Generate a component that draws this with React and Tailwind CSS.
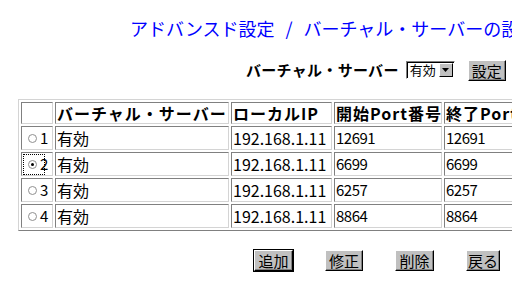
const rows = [
  { no: 1, state: '有効', ip: '192.168.1.11', start: '12691', end: '12691' },
  { no: 2, state: '有効', ip: '192.168.1.11', start: '6699', end: '6699', checked: true },
  { no: 3, state: '有効', ip: '192.168.1.11', start: '6257', end: '6257' },
  { no: 4, state: '有効', ip: '192.168.1.11', start: '8864', end: '8864' },
];

const cell =
  'p-0 pl-[1px] border border-t-[#808080] border-l-[#808080] border-b-[#d4d4d4] border-r-[#d4d4d4] align-middle whitespace-nowrap overflow-hidden';

const head = cell + ' text-left text-[16px] font-bold tracking-[1px] leading-[18px]';

const Radio = ({ checked }) => (
  <span className="relative shrink-0 inline-block w-[9px] h-[9px] rounded-full border border-[#909090] bg-white">
    {checked && (
      <span className="absolute left-[2px] top-[2px] w-[3px] h-[3px] rounded-full bg-black" />
    )}
  </span>
);

// classic raised button, width taken from the screenshot
const WinButton = ({ label, isDefault, className }) => (
  <span className={(isDefault ? 'border border-black ' : '') + 'inline-flex ' + className}>
    <button
      type="button"
      className="w-full h-[21px] p-0 bg-[#c0c0c0] text-[15px] leading-[16px] text-black border border-t-white border-l-white border-b-black border-r-black shadow-[inset_-1px_-1px_#808080]"
    >
      {label}
    </button>
  </span>
);

export default function App() {
  return (
    <div className="w-[512px] h-[286px] overflow-hidden bg-white pt-[16px] font-['Noto_Sans_CJK_JP',sans-serif] text-black">
      <div className="h-[24px] leading-[24px] pl-[130px] text-[18px] text-[#0000ff] whitespace-nowrap">
        アドバンスド設定<span className="inline-block w-[29px] text-center">/</span>バーチャル・サーバーの設定
      </div>

      <div className="mt-[19px] h-[21px] flex items-center pl-[246px] whitespace-nowrap">
        <span className="text-[15px] font-bold tracking-[0.3px] leading-[20px]">バーチャル・サーバー</span>
        <span className="ml-[7px] w-[49px] h-[18px] flex items-center bg-white border border-t-[#808080] border-l-[#808080] border-b-white border-r-white shadow-[inset_1px_1px_#000]">
          <span className="flex-1 pl-[3px] text-[13px] leading-[14px]">有効</span>
          <span className="w-[14px] h-[14px] mr-[1px] bg-[#c0c0c0] border border-t-white border-l-white border-b-black border-r-black flex items-center justify-center">
            <svg width="7" height="4" viewBox="0 0 7 4">
              <path d="M0 0h7L3.5 4z" fill="#000" />
            </svg>
          </span>
        </span>
        <span className="ml-[13px]">
          <button
            type="button"
            className="h-[21px] w-[38px] p-0 bg-[#c0c0c0] text-[15px] leading-[16px] border border-t-white border-l-white border-b-black border-r-black shadow-[inset_-1px_-1px_#808080]"
          >
            設定
          </button>
        </span>
      </div>

      <table className="mt-[19px] ml-[18px] table-fixed border-separate border-spacing-[2px] border border-t-[#d4d4d4] border-l-[#d4d4d4] border-b-[#808080] border-r-[#808080] w-[541px]">
        <colgroup>
          <col className="w-[32px]" />
          <col className="w-[174px]" />
          <col className="w-[101px]" />
          <col className="w-[108px]" />
          <col className="w-[112px]" />
        </colgroup>
        <thead>
          <tr className="h-[22px]">
            <th className={cell}></th>
            <th className={head}>バーチャル・サーバー</th>
            <th className={head}>ローカルIP</th>
            <th className={head}>開始Port番号</th>
            <th className={head}>終了Port番号</th>
          </tr>
        </thead>
        <tbody>
          {rows.map((r) => (
            <tr key={r.no} className="h-[24px]">
              <td className={cell + ' pl-0'}>
                <span
                  className={
                    'flex items-center h-[21px] w-[22px] pl-[4px] border border-dotted ' +
                    (r.checked ? 'border-black' : 'border-transparent')
                  }
                >
                  <Radio checked={r.checked} />
                  <span className="ml-[3px] text-[15px] leading-[16px]">{r.no}</span>
                </span>
              </td>
              <td className={cell + ' text-[16px] leading-[18px]'}>{r.state}</td>
              <td className={cell + ' text-[16px] leading-[18px]'}>{r.ip}</td>
              <td className={cell + ' text-[15px] leading-[18px] tracking-[-0.5px]'}>{r.start}</td>
              <td className={cell + ' text-[15px] leading-[18px] tracking-[-0.5px]'}>{r.end}</td>
            </tr>
          ))}
        </tbody>
      </table>

      <div className="mt-[18px] pl-[253px] flex items-center whitespace-nowrap">
        <WinButton label="追加" isDefault className="w-[41px]" />
        <WinButton label="修正" className="ml-[31px] w-[38px]" />
        <WinButton label="削除" className="ml-[32px] w-[39px]" />
        <WinButton label="戻る" className="ml-[32px] w-[34px]" />
      </div>
    </div>
  );
}
